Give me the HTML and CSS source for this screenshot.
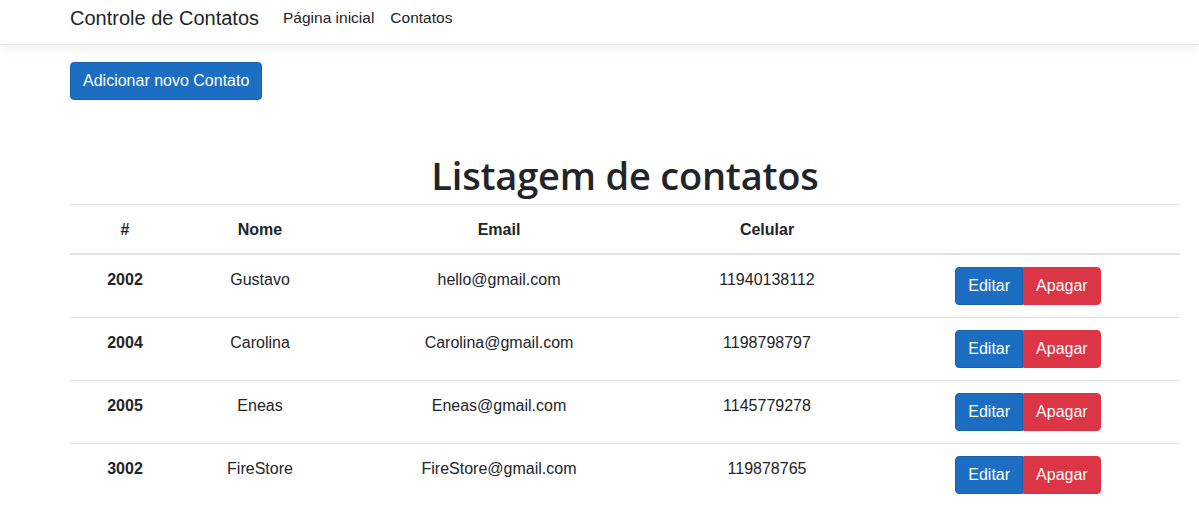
FILE: index.html
```html
<!DOCTYPE html>
<html lang="pt-BR">
<head>
<meta charset="utf-8">
<title>Controle de Contatos</title>
<link rel="stylesheet" href="styles.css">
</head>
<body>
<header class="navbar">
  <div class="container nav-inner">
    <a class="brand" href="#">Controle de Contatos</a>
    <nav class="nav-links">
      <a class="nav-link" href="#">Página inicial</a>
      <a class="nav-link" href="#">Contatos</a>
    </nav>
  </div>
</header>
<main class="container">
  <div class="actions-top">
    <a class="btn btn-primary" href="#">Adicionar novo Contato</a>
  </div>
  <h1 class="title">Listagem de contatos</h1>
  <table class="table">
    <colgroup>
      <col class="c1"><col class="c2"><col class="c3"><col class="c4"><col class="c5">
    </colgroup>
    <thead>
      <tr><th>#</th><th>Nome</th><th>Email</th><th>Celular</th><th></th></tr>
    </thead>
    <tbody>
      <tr><th>2002</th><td>Gustavo</td><td>hello@gmail.com</td><td>11940138112</td>
        <td class="cell-actions"><div class="btn-group"><a class="btn btn-primary" href="#">Editar</a><a class="btn btn-danger" href="#">Apagar</a></div></td></tr>
      <tr><th>2004</th><td>Carolina</td><td>Carolina@gmail.com</td><td>1198798797</td>
        <td class="cell-actions"><div class="btn-group"><a class="btn btn-primary" href="#">Editar</a><a class="btn btn-danger" href="#">Apagar</a></div></td></tr>
      <tr><th>2005</th><td>Eneas</td><td>Eneas@gmail.com</td><td>1145779278</td>
        <td class="cell-actions"><div class="btn-group"><a class="btn btn-primary" href="#">Editar</a><a class="btn btn-danger" href="#">Apagar</a></div></td></tr>
      <tr><th>3002</th><td>FireStore</td><td>FireStore@gmail.com</td><td>119878765</td>
        <td class="cell-actions"><div class="btn-group"><a class="btn btn-primary" href="#">Editar</a><a class="btn btn-danger" href="#">Apagar</a></div></td></tr>
    </tbody>
  </table>
</main>
</body>
</html>
```
FILE: styles.css
```css
* { box-sizing: border-box; }
html, body { margin: 0; padding: 0; }
body {
  font-family: "Liberation Sans", Arial, sans-serif;
  font-size: 16px;
  line-height: 1.5;
  color: #212529;
  background: #fff;
}
a { text-decoration: none; }
.container {
  width: 1110px;
  margin-left: 70px;
}
.navbar {
  height: 45px;
  border-bottom: 1px solid #e5e5e5;
  box-shadow: 0 4px 12px rgba(0,0,0,.05);
  background: #fff;
}
.nav-inner {
  display: flex;
  align-items: center;
  height: 36px;
}
.brand {
  font-size: 20px;
  color: #212529;
  margin-right: 16px;
  line-height: 30px;
}
.nav-links { display: flex; }
.nav-link {
  color: #212529;
  padding: 0 8px;
  font-size: 15.5px;
}
.actions-top { padding-top: 17px; }
.btn {
  display: inline-block;
  font-size: 16px;
  line-height: 24px;
  padding: 6px 12px;
  border: 1px solid transparent;
  border-radius: 4px;
  color: #fff;
  text-align: center;
}
.btn-primary { background: #1b6ec2; border-color: #1861ac; }
.btn-danger { background: #dc3545; border-color: #dc3545; }
.title {
  text-align: center;
  font-family: "Open Sans", "Liberation Sans", sans-serif;
  font-size: 38px;
  font-weight: 600;
  line-height: 48px;
  margin: 51px 0 5px;
  letter-spacing: -0.2px;
}
.table {
  width: 100%;
  border-collapse: collapse;
  text-align: center;
}
.c1 { width: 110px; }
.c2 { width: 160px; }
.c3 { width: 318px; }
.c4 { width: 218px; }
.c5 { width: 304px; }
.table th, .table td {
  padding: 13px 12px 11px;
  vertical-align: top;
  border-top: 1px solid #dee2e6;
}
.table td.cell-actions { padding: 12px; }
.table th { font-weight: 700; }
.table thead th {
  vertical-align: bottom;
  border-bottom: 2px solid #dee2e6;
}
.btn-group { display: inline-flex; }
.btn-group .btn:first-child { border-top-right-radius: 0; border-bottom-right-radius: 0; }
.btn-group .btn:last-child { border-top-left-radius: 0; border-bottom-left-radius: 0; }
```
